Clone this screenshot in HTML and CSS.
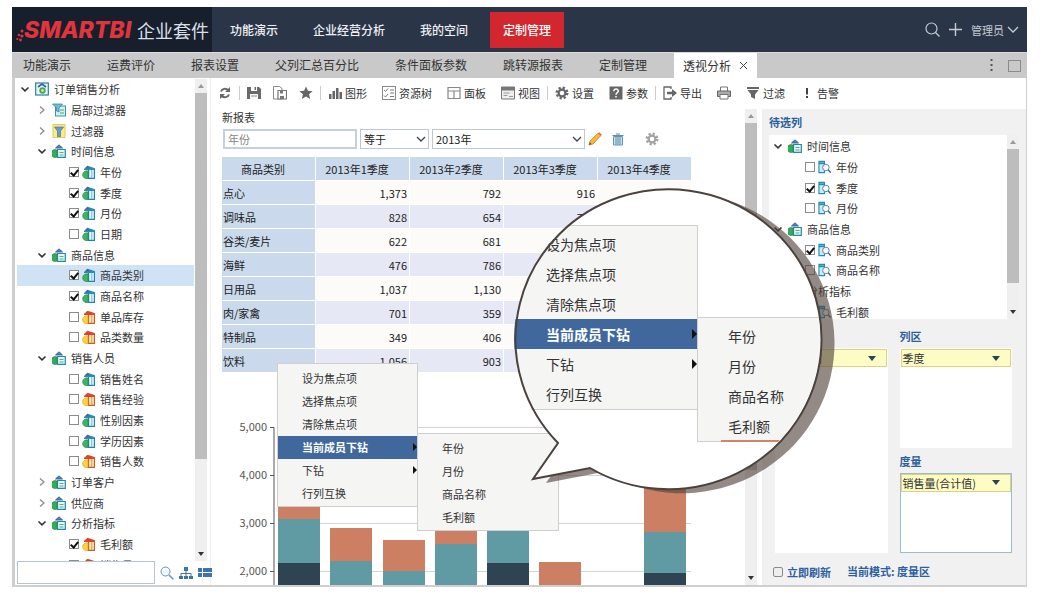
FILE: index.html
```html
<!DOCTYPE html>
<html lang="zh-CN">
<head>
<meta charset="utf-8">
<title>SMARTBI 企业套件</title>
<link rel="stylesheet" href="styles.css">
</head>
<body>
<svg class="defs" aria-hidden="true">
  <symbol id="down" viewBox="0 0 10 10"><path d="M1.5 3.5 5 6.8 8.500 3.500" fill="none" stroke="#333" stroke-width="1.6"/></symbol>
  <symbol id="right" viewBox="0 0 10 10"><path d="M3 1.500 7 5 3 8.500" fill="none" stroke="#888" stroke-width="1.200"/></symbol>
  <symbol id="root" viewBox="0 0 14 14"><rect x=".7" y="1" width="12.600" height="12" fill="#eef7fb" stroke="#2b7f9e" stroke-width="1.200"/><path d="M3 5 7 2l4 3" fill="none" stroke="#345cae" stroke-width="1.600"/><circle cx="7.500" cy="8.500" r="3.200" fill="#46ab55"/><circle cx="7.500" cy="8.500" r="1.300" fill="#e9f2a0"/></symbol>
  <symbol id="localfilter" viewBox="0 0 14 14"><rect x="3.500" y="3" width="10" height="10" fill="#d5eef5" stroke="#3b93ae"/><path d="M.5 1h10L7 5v4L4.500 8V5z" fill="#6fbccb" stroke="#3b8aa0" stroke-width=".8"/><path d="M8 7h4M8 10h4" stroke="#4ea867"/></symbol>
  <symbol id="filter" viewBox="0 0 14 14"><rect x="1" y=".5" width="12" height="13" fill="#fbe98a" stroke="#e2cb55"/><path d="M2.500 3h9L8.500 7v5.500h-3V7z" fill="#6b9bc9" stroke="#4476ac" stroke-width=".7"/></symbol>
  <symbol id="folder" viewBox="0 0 14 14"><path d="M5.500 5.500h7.800v7.800H5.500z" fill="#e3f6f4" stroke="#2789a6" stroke-width="1.200"/><path d="M7.500 8.500h4M7.500 11h4" stroke="#4bb38a"/><path d="M5 6a4 4 0 1 0 0 7z" fill="#37aa57" stroke="#238745" stroke-width=".6"/><path d="M3.500 4 7 .8 10.500 4z" fill="#5683c6" stroke="#2d4a93" stroke-width=".8"/></symbol>
  <symbol id="dim" viewBox="0 0 13 14"><path d="M6.500 4h6v9.500h-6z" fill="#e3f5fc" stroke="#1e84b4" stroke-width="1.300"/><path d="M9.800 4v9" stroke="#79b9d8"/><path d="M6 6a4 4 0 1 0 0 7.500z" fill="#3fb45d" stroke="#248747" stroke-width=".6"/><path d="M2 4 5.500.7 12.500 3V5H2z" fill="#2d8dac"/><path d="M3 3.500 5.500.8 8 3.500z" fill="#4862b5"/></symbol>
  <symbol id="measure" viewBox="0 0 13 14"><path d="M6.500 4h6v9.500h-6z" fill="#fdeab8" stroke="#cf5a22" stroke-width="1.300"/><path d="M9.800 4v9" stroke="#dc9351"/><path d="M6 6a4 4 0 1 0 0 7.500z" fill="#ffd23d" stroke="#d79b21" stroke-width=".6"/><path d="M2 4 5.500.7 12.500 3V5H2z" fill="#d9442e"/></symbol>
  <symbol id="lookup" viewBox="0 0 14 14"><path d="M1 1h6v12H1z" fill="#c7ebf7" stroke="#268cb5" stroke-width="1.200"/><path d="M1 3h6" stroke="#268cb5" stroke-width="2"/><circle cx="8.500" cy="7.500" r="3.500" fill="#f3fbff" stroke="#647c91"/><path d="m11 10 2.700 3.200" stroke="#4b6580" stroke-width="1.400"/></symbol>
  <symbol id="cog" viewBox="0 0 14 14"><circle cx="7" cy="7" r="5.300" fill="none" stroke="currentColor" stroke-width="2.400" stroke-dasharray="2.200 1.963"/><circle cx="7" cy="7" r="3.400" fill="none" stroke="currentColor" stroke-width="2.200"/></symbol>
</svg>

<div class="app">
  <header class="top">
    <div class="brand">
      <svg class="dots" viewBox="0 0 8 16" aria-hidden="true"><g fill="#e0353d"><circle cx="6" cy="5" r="1.500"/><circle cx="3" cy="9" r="1.300"/><circle cx="6" cy="10" r="1.600"/><circle cx="1.300" cy="13" r="1.100"/><circle cx="4.500" cy="14" r="1.400"/></g></svg>
      <span class="wordmark">SMARTBI</span><span class="suite">企业套件</span>
    </div>
    <nav class="nav">
      <a href="#">功能演示</a><a href="#">企业经营分析</a><a href="#">我的空间</a><a href="#" class="on">定制管理</a>
    </nav>
    <div class="user">
      <svg width="15" height="15" viewBox="0 0 15 15" aria-hidden="true"><g fill="none" stroke="#c5cad3" stroke-width="1.200"><circle cx="6.500" cy="6.500" r="5.500"/><path d="m10.500 10.500 4 4"/></g></svg>
      <svg width="13" height="13" viewBox="0 0 13 13" aria-hidden="true"><path d="M6.500 0v13M0 6.500h13" stroke="#c5cad3" stroke-width="1.400"/></svg>
      <button type="button" class="who">管理员<svg width="12" height="8" viewBox="0 0 12 8" aria-hidden="true"><path d="m1 1 5 5 5-5" fill="none" stroke="#c5cad3" stroke-width="1.300"/></svg></button>
    </div>
  </header>

  <nav class="tabs">
    <a href="#">功能演示</a><a href="#">运费评价</a><a href="#">报表设置</a><a href="#">父列汇总百分比</a><a href="#">条件面板参数</a><a href="#">跳转源报表</a><a href="#">定制管理</a>
    <a href="#" class="on">透视分析<svg width="9" height="9" viewBox="0 0 9 9" aria-hidden="true"><path d="m1 1 7 7M8 1 1 8" stroke="#444"/></svg></a>
    <span class="tabtools">
      <svg width="3" height="13" viewBox="0 0 3 13" aria-hidden="true"><path d="M.5 0h2v2h-2zM.5 5h2v2h-2zM.5 10h2v2h-2z" fill="#555"/></svg>
      <svg width="13" height="12" viewBox="0 0 13 12" aria-hidden="true"><rect x=".5" y=".5" width="12" height="11" fill="none" stroke="#8a8a8a"/></svg>
    </span>
  </nav>

  <div class="main">
    <aside class="side">
      <div class="scroller">
        <div class="clip">
          <ul class="tree long">
            <li class="l0"><svg class="ar"><use href="#down"/></svg><svg class="ic"><use href="#root"/></svg>订单销售分析</li>
            <li class="l1"><svg class="ar"><use href="#right"/></svg><svg class="ic"><use href="#localfilter"/></svg>局部过滤器</li>
            <li class="l1"><svg class="ar"><use href="#right"/></svg><svg class="ic"><use href="#filter"/></svg>过滤器</li>
            <li class="l1"><svg class="ar"><use href="#down"/></svg><svg class="ic"><use href="#folder"/></svg>时间信息</li>
            <li class="l2"><label><input type="checkbox" checked><svg class="ic"><use href="#dim"/></svg>年份</label></li>
            <li class="l2"><label><input type="checkbox" checked><svg class="ic"><use href="#dim"/></svg>季度</label></li>
            <li class="l2"><label><input type="checkbox" checked><svg class="ic"><use href="#dim"/></svg>月份</label></li>
            <li class="l2"><label><input type="checkbox"><svg class="ic"><use href="#dim"/></svg>日期</label></li>
            <li class="l1"><svg class="ar"><use href="#down"/></svg><svg class="ic"><use href="#folder"/></svg>商品信息</li>
            <li class="l2 sel"><label><input type="checkbox" checked><svg class="ic"><use href="#dim"/></svg>商品类别</label></li>
            <li class="l2"><label><input type="checkbox" checked><svg class="ic"><use href="#dim"/></svg>商品名称</label></li>
            <li class="l2"><label><input type="checkbox"><svg class="ic"><use href="#measure"/></svg>单品库存</label></li>
            <li class="l2"><label><input type="checkbox"><svg class="ic"><use href="#measure"/></svg>品类数量</label></li>
            <li class="l1"><svg class="ar"><use href="#down"/></svg><svg class="ic"><use href="#folder"/></svg>销售人员</li>
            <li class="l2"><label><input type="checkbox"><svg class="ic"><use href="#dim"/></svg>销售姓名</label></li>
            <li class="l2"><label><input type="checkbox"><svg class="ic"><use href="#measure"/></svg>销售经验</label></li>
            <li class="l2"><label><input type="checkbox"><svg class="ic"><use href="#dim"/></svg>性别因素</label></li>
            <li class="l2"><label><input type="checkbox"><svg class="ic"><use href="#dim"/></svg>学历因素</label></li>
            <li class="l2"><label><input type="checkbox"><svg class="ic"><use href="#measure"/></svg>销售人数</label></li>
            <li class="l1"><svg class="ar"><use href="#right"/></svg><svg class="ic"><use href="#folder"/></svg>订单客户</li>
            <li class="l1"><svg class="ar"><use href="#right"/></svg><svg class="ic"><use href="#folder"/></svg>供应商</li>
            <li class="l1"><svg class="ar"><use href="#down"/></svg><svg class="ic"><use href="#folder"/></svg>分析指标</li>
            <li class="l2"><label><input type="checkbox" checked><svg class="ic"><use href="#measure"/></svg>毛利额</label></li>
            <li class="l2"><label><input type="checkbox"><svg class="ic"><use href="#measure"/></svg>销售量</label></li>
          </ul>
        </div>
        <div class="bar"><i class="up"></i><b class="thumb t80"></b><i class="dn"></i></div>
      </div>
      <div class="find">
        <input type="text" aria-label="搜索">
        <svg width="14" height="14" viewBox="0 0 14 14" aria-hidden="true"><circle cx="5.500" cy="5.500" r="4.500" fill="#f3fafe" stroke="#6e93b3"/><path d="m9 9 4.300 4.300" stroke="#6e93b3" stroke-width="1.600"/></svg>
        <svg width="14" height="12" viewBox="0 0 14 12" aria-hidden="true"><path d="M5 0h4v4H5zM0 9h4v3H0zM5 9h4v3H5zM10 9h4v3h-4z" fill="#3f73a8"/><path d="M7 4v5M2 9V6.500h10V9" fill="none" stroke="#3f73a8"/></svg>
        <svg width="14" height="9" viewBox="0 0 14 9" aria-hidden="true"><path d="M0 0h4v4H0zM5 0h9v4H5zM0 5h4v4H0zM5 5h9v4H5z" fill="#3f73b0"/></svg>
      </div>
    </aside>

    <section class="work">
      <div class="tools">
        <div class="grp">
          <button type="button" aria-label="刷新"><svg viewBox="0 0 14 14"><path d="M3 5.500C4 2.500 8 2 10 4M11 8.500c-1 3-5 3.500-7 1.500" fill="none" stroke="#666" stroke-width="2"/><path d="M12 1v5H7zM2 13V8h5z" fill="#666"/></svg></button>
        </div>
        <div class="grp icons">
          <button type="button" aria-label="保存"><svg viewBox="0 0 14 14"><path d="M0 1h12l2 2v10H0z" fill="#6a6a6a"/><path d="M4 1h6v4H4zM3 8h8v5H3z" fill="#fff"/><path d="M7.500 1H9v3H7.500z" fill="#6a6a6a"/><path d="M4 10h6" stroke="#888"/></svg></button>
          <button type="button" aria-label="另存"><svg viewBox="0 0 14 14"><path d="M.5.500h6l2.500 2V13H.5z" fill="none" stroke="#888"/><path d="M5 4.500h8.500V13H5z" fill="#fff" stroke="#777" stroke-width="1.200"/><path d="M7 4.500h3v3H7zM7 10h4v3H7z" fill="#777"/></svg></button>
          <button type="button" aria-label="收藏"><svg viewBox="0 0 14 14"><path d="m7 .5 1.900 4.300 4.700.4L10 8.300l1.200 4.700L7 10.500 2.800 13 4 8.300.4 5.200l4.700-.4z" fill="#666"/></svg></button>
        </div>
        <div class="grp">
          <button type="button"><svg viewBox="0 0 14 14"><path d="M1 8h2.500v5H1zM4.500 5H7v8H4.500zM8 2h2.500v11H8zM11.500 6H14v7h-2.500z" fill="#666"/></svg>图形</button>
          <button type="button"><svg viewBox="0 0 14 14"><rect x=".5" y=".5" width="13" height="13" fill="#fff" stroke="#888"/><path d="m2 4 1.500 1.500L6 2.500M2 9.500 3.500 11 6 8M8 4h4M8 7h4M8 10.500h4" fill="none" stroke="#777"/></svg>资源树</button>
          <button type="button"><svg viewBox="0 0 14 14"><path d="M1 1.500h12v11H1zM1 5h12M7 5v7.500" fill="none" stroke="#888" stroke-width="1.200"/></svg>面板</button>
          <button type="button"><svg viewBox="0 0 14 14"><path d="M.5 1h13v12H.5z" fill="#eee" stroke="#777"/><path d="M1 1h12v3.500H1z" fill="#777"/><path d="M2.500 7h6M2.500 9.500h4M8 10.500h4" stroke="#999"/></svg>视图</button>
        </div>
        <div class="grp">
          <button type="button"><svg viewBox="0 0 14 14"><use href="#cog"/></svg>设置</button>
          <button type="button"><svg viewBox="0 0 14 14"><path d="M.5.500h13v13H.5z" fill="#666"/><path d="M4.800 5.200c0-3 4.600-2.800 4.400-.1C9.100 6.700 7 6.800 7 8.800M7 10v1.600" fill="none" stroke="#fff" stroke-width="1.500"/></svg>参数</button>
        </div>
        <div class="grp">
          <button type="button"><svg viewBox="0 0 14 14"><path d="M8 3V1H1v12h7v-2" fill="none" stroke="#666" stroke-width="1.300"/><path d="M4 5.800h5V3l5 4-5 4V8.200H4z" fill="#666"/></svg>导出</button>
          <button type="button" aria-label="打印"><svg viewBox="0 0 14 14"><path d="M3.500 5V1h7v4" fill="#fff" stroke="#777"/><path d="M.5 5h13v5.500H.5z" fill="#aaa" stroke="#666"/><path d="M3 8.500h8V13H3z" fill="#fff" stroke="#777"/></svg></button>
          <button type="button"><svg viewBox="0 0 14 14"><path d="M1 1h12v2H1zM1.500 4h11L9 8.500V13l-4-2V8.500z" fill="#666"/></svg>过滤</button>
          <button type="button"><svg viewBox="0 0 14 14"><path d="M6 2h2v6.500H6zM6 10h2v2H6z" fill="#444"/></svg>告警</button>
        </div>
      </div>

      <div class="split">
        <div class="report">
          <div class="page">
            <h1>新报表</h1>
            <form class="conds">
              <input type="text" placeholder="年份" aria-label="字段" class="c1">
              <span class="pick c2"><select aria-label="条件"><option>等于</option></select><svg width="10" height="7" viewBox="0 0 10 7" aria-hidden="true"><path d="m1 1 4 4 4-4" fill="none" stroke="#444" stroke-width="1.300"/></svg></span>
              <span class="pick c3"><select aria-label="值"><option>2013年</option></select><svg width="10" height="7" viewBox="0 0 10 7" aria-hidden="true"><path d="m1 1 4 4 4-4" fill="none" stroke="#444" stroke-width="1.300"/></svg></span>
              <button type="button" aria-label="编辑"><svg viewBox="0 0 14 14"><path d="m1 13 1-4L10 1.200l2.800 2.500L5 12z" fill="#f5b93c" stroke="#c88321" stroke-width=".8"/><path d="m10 1.200 2.800 2.500 1-1.200L11.200.2z" fill="#d66a50"/><path d="m1 13 .8-2.500L3.500 12z" fill="#444"/></svg></button>
              <button type="button" aria-label="删除"><svg viewBox="0 0 14 14"><path d="M2.500 4.500h9V13h-9z" fill="#c8dfea" stroke="#6797b4"/><path d="M1.500 3.500h11M5 2h4M5 5v7.500M7 5v7.500M9 5v7.500" stroke="#5f8eae"/></svg></button>
              <button type="button" aria-label="设置" class="pref"><svg viewBox="0 0 14 14"><use href="#cog"/></svg></button>
            </form>

            <table class="grid">
              <thead><tr><th>商品类别</th><th>2013年1季度</th><th>2013年2季度</th><th>2013年3季度</th><th>2013年4季度</th></tr></thead>
              <tbody>
                <tr><th>点心</th><td>1,373</td><td>792</td><td>916</td><td>1,016</td></tr>
                <tr><th>调味品</th><td>828</td><td>654</td><td>729</td><td></td></tr>
                <tr><th>谷类/麦片</th><td>622</td><td>681</td><td></td><td></td></tr>
                <tr><th>海鲜</th><td>476</td><td>786</td><td></td><td></td></tr>
                <tr><th>日用品</th><td>1,037</td><td>1,130</td><td></td><td></td></tr>
                <tr><th>肉/家禽</th><td>701</td><td>359</td><td></td><td></td></tr>
                <tr><th>特制品</th><td>349</td><td>406</td><td></td><td></td></tr>
                <tr><th>饮料</th><td>1,056</td><td>903</td><td></td><td></td></tr>
              </tbody>
            </table>

            <svg class="chart" width="480" height="212" viewBox="0 0 480 212" role="img" aria-label="销售柱状图">
              <path d="M56 53.500h413M56 101.500h413M56 149.500h413M56 197.500h413" stroke="#d4d4d4"/>
              <path d="M48 53.500h4v158.500M48 101.500h4M48 149.500h4M48 197.500h4" fill="none" stroke="#555"/>
              <g class="ticks"><text x="45" y="57">5,000</text><text x="45" y="105">4,000</text><text x="45" y="153">3,000</text><text x="45" y="201">2,000</text></g>
              <g fill="#cd7f63"><path d="M56 131h42v14H56zM108 154h42v33h-42zM161 166h42v31h-42zM213 150h42v20h-42zM317 188h42v24h-42zM422 100h42v58h-42z"/></g>
              <g fill="#609ba3"><path d="M56 145h42v44H56zM108 187h42v25h-42zM161 197h42v15h-42zM213 170h42v42h-42zM265 150h42v39h-42zM422 158h42v41h-42z"/></g>
              <g fill="#2e4453"><path d="M56 189h42v23H56zM265 189h42v23h-42zM422 199h42v13h-42z"/></g>
            </svg>
          </div>
          <div class="bar"><i class="up"></i><b class="thumb t76"></b><i class="dn"></i></div>
        </div>

        <aside class="config">
          <h2>待选列</h2>
          <div class="cols">
            <div class="clip">
              <ul class="tree short">
                <li class="l1"><svg class="ar"><use href="#down"/></svg><svg class="ic"><use href="#folder"/></svg>时间信息</li>
                <li class="l2"><label><input type="checkbox"><svg class="ic"><use href="#lookup"/></svg>年份</label></li>
                <li class="l2"><label><input type="checkbox" checked><svg class="ic"><use href="#lookup"/></svg>季度</label></li>
                <li class="l2"><label><input type="checkbox"><svg class="ic"><use href="#lookup"/></svg>月份</label></li>
                <li class="l1"><svg class="ar"><use href="#down"/></svg><svg class="ic"><use href="#folder"/></svg>商品信息</li>
                <li class="l2"><label><input type="checkbox" checked><svg class="ic"><use href="#lookup"/></svg>商品类别</label></li>
                <li class="l2"><label><input type="checkbox"><svg class="ic"><use href="#lookup"/></svg>商品名称</label></li>
                <li class="l1"><svg class="ar"><use href="#down"/></svg><svg class="ic"><use href="#folder"/></svg>分析指标</li>
                <li class="l2"><label><input type="checkbox"><svg class="ic"><use href="#lookup"/></svg>毛利额</label></li>
              </ul>
            </div>
            <div class="bar"><i class="up"></i><b class="thumb t88"></b><i class="dn"></i></div>
          </div>
          <div class="zones">
            <div class="zcol"><h2>行区</h2><div class="zone"><button type="button" class="chip">商品类别<i></i></button></div></div>
            <div class="zcol">
              <h2>列区</h2><div class="zone z1"><button type="button" class="chip">季度<i></i></button></div>
              <h2 class="second">度量</h2><div class="zone z2"><button type="button" class="chip">销售量(合计值)<i></i></button></div>
            </div>
          </div>
          <div class="mode"><label><input type="checkbox">立即刷新</label><span>当前模式: 度量区</span></div>
        </aside>
      </div>
    </section>
  </div>

  <div class="ctx">
    <ul class="menu"><li>设为焦点项</li><li>选择焦点项</li><li>清除焦点项</li><li class="hot more">当前成员下钻</li><li class="more">下钻</li><li>行列互换</li></ul>
    <ul class="menu sub"><li>年份</li><li>月份</li><li>商品名称</li><li>毛利额</li></ul>
  </div>

  <div class="callout">
    <svg class="shape" viewBox="0 0 340 330" aria-hidden="true">
      <path d="M58 263A153 150 0 1 1 90 288L33 299Z" transform="translate(13 4)" fill="#52423a" fill-opacity=".62"/>
      <path d="M58 263A153 150 0 1 1 90 288L33 299Z" fill="#fff"/>
    </svg>
    <div class="lens">
      <ul class="menu big"><li>设为焦点项</li><li>选择焦点项</li><li>清除焦点项</li><li class="hot more">当前成员下钻</li><li class="more">下钻</li><li>行列互换</li></ul>
      <ul class="menu big sub"><li>年份</li><li>月份</li><li>商品名称</li><li>毛利额</li></ul>
    </div>
    <svg class="shape" viewBox="0 0 340 330" aria-hidden="true"><path d="M58 263A153 150 0 1 1 90 288L33 299Z" fill="none" stroke="#4a423e" stroke-width="2"/></svg>
  </div>
</div>
</body>
</html>
```

FILE: styles.css
```css
* { box-sizing: border-box; }
body {
  margin: 0;
  padding: 7px 16px 13px 12px;
  background: #fff;
  color: #333;
  font: 11px/20px "Noto Sans CJK SC", "Noto Sans", sans-serif;
}
ul { margin: 0; padding: 0; list-style: none; }
a { color: inherit; text-decoration: none; }
svg { flex: none; display: block; }
.defs { position: absolute; width: 0; height: 0; }
button { margin: 0; padding: 0; border: 0; background: none; color: inherit; font: inherit; }

.app {
  position: relative;
  display: flex;
  flex-direction: column;
  height: calc(100vh - 20px);
  min-height: 560px;
}

/* header */
.top { display: flex; height: 45px; background: #2b3548; color: #eceff3; }
.brand { display: flex; align-items: center; width: 200px; padding-left: 4px; background: #181f2c; }
.dots { width: 8px; height: 16px; align-self: flex-end; margin-bottom: 10px; }
.wordmark { color: #e0353d; font: italic 800 23px/44px Inter, sans-serif; width: 109px; white-space: nowrap; }
.suite { margin-left: 4px; color: #d9dfe8; font-size: 18px; line-height: 42px; white-space: nowrap; }
.nav { display: flex; flex: 1; gap: 9px; padding: 5px 5px 4px; font-size: 12px; font-weight: 500; line-height: 36px; white-space: nowrap; }
.nav a { padding: 0 13px; }
.nav .on { background: #d3272f; color: #fff; }
.user { display: flex; align-items: center; gap: 9px; padding-right: 8px; color: #c5cad3; }
.who { display: flex; align-items: center; gap: 3px; }

/* tabs */
.tabs {
  display: flex; gap: 18px; height: 26px; padding-left: 2px;
  border-top: 1px solid #dcdcdc; background: #c9c9c9;
  font-size: 12px; line-height: 24px; white-space: nowrap;
}
.tabs a { padding: 0 9px; }
.tabs .on { display: flex; align-items: center; gap: 8px; background: #fff; }
.tabtools { display: flex; align-items: center; gap: 15px; margin-left: auto; padding-right: 6px; }

.main {
  display: flex; flex: 1; min-height: 0;
  border: solid #cfcfcf; border-width: 0 1px 2px 3px;
  background: #fff;
}

/* scroll bars */
.bar { display: flex; flex-direction: column; align-items: stretch; width: 12px; background: #efefef; }
.bar i { height: 14px; flex: none; }
.up::before, .dn::before { content: ""; display: block; margin: 5px auto 0; width: 0; border: 3px solid transparent; }
.up::before { border-top: 0; border-bottom: 4px solid #999; }
.dn::before { border-bottom: 0; border-top: 4px solid #333; }
.dn { margin-top: auto; }
.thumb { background: #bdbdbd; }
.t80 { height: 76%; }
.t76 { height: 73%; }
.t88 { height: 73%; }

/* trees */
.clip { flex: 1; min-width: 0; overflow: hidden; }
.tree { display: grid; grid-auto-rows: 1fr; white-space: nowrap; line-height: 18px; }
.tree li, .tree label { display: flex; align-items: center; gap: 5px; }
.tree label { gap: 3px; }
.tree label .ic { width: 13px; margin-right: 2px; }
.long { height: 496px; margin: 0 1px 0 2px; }
.short { height: 186px; padding: 0; }
.ar { width: 10px; height: 10px; }
.ic { width: 14px; height: 14px; }
.l0 { padding-left: 3px; }
.l1 { padding-left: 20px; }
.l2 { padding-left: 52px; }
.short .l1 { padding-left: 4px; }
.short .l2 { padding-left: 36px; }
.sel { background: #cfe3f5; }
input[type="checkbox"] {
  appearance: none; flex: none; width: 10px; height: 10px; margin: 0;
  border: 1px solid #8b8b8b; background: #fff;
}
input[type="checkbox"]:checked::after {
  content: ""; display: block; width: 3px; height: 6px; margin: 0 0 0 2px;
  border: solid #111; border-width: 0 2px 2px 0; transform: rotate(40deg);
}

.side { display: flex; flex-direction: column; width: 196px; flex: none; padding: 1px 3px 1px 0; border-right: 1px solid #ececec; }
.scroller { display: flex; flex: 1; min-height: 0; }
.find { display: flex; align-items: center; gap: 5px; height: 23px; padding-left: 2px; }
.find input { width: 138px; height: 23px; border: 1px solid #b9c4d2; background: #fff; }

/* toolbar */
.work { display: flex; flex: 1; flex-direction: column; min-width: 0; }
.tools { display: flex; align-items: center; height: 31px; padding-bottom: 2px; white-space: nowrap; }
.grp { display: flex; gap: 15px; padding: 0 7px; border-left: 1px solid #ccc; line-height: 14px; }
.grp:first-child { border: 0; }
.icons { gap: 12px; }
.tools button { display: flex; align-items: center; gap: 3px; }
.tools svg { width: 14px; height: 14px; color: #666; }

.split { display: flex; flex: 1; min-height: 0; }
.report { display: flex; flex: 1; min-width: 0; padding-right: 5px; }
.page { flex: 1; min-width: 0; overflow: hidden; padding-left: 11px; }
h1 { margin: 0 0 4px; font-size: 11px; font-weight: 400; line-height: 16px; }
.conds { display: flex; align-items: center; gap: 3px; height: 20px; }
.conds input, .conds select {
  width: 100%; height: 20px; padding: 0 3px; border: 1px solid #bfc8d0; border-radius: 0;
  background: #fff; color: #222; font: 11px/18px "Noto Sans CJK SC", sans-serif; appearance: none;
}
.conds .c1 { width: 134px; margin-left: 1px; border: 2px solid #c5d0da; }
.conds input::placeholder { color: #888; opacity: 1; }
.pick { position: relative; }
.pick svg { position: absolute; right: 3px; top: 7px; }
.c2 { width: 69px; }
.c3 { width: 153px; }
.conds button { width: 14px; }
.conds button + button { margin-left: 6px; }
.conds .pref, .conds button + .pref { margin-left: 17px; color: #a3a3a3; }
.conds button svg { width: 14px; height: 14px; }

.grid { width: 470px; margin-top: 8px; table-layout: fixed; border-collapse: separate; border-spacing: 0; line-height: 20px; }
.grid th, .grid td { height: 24px; padding: 0 2px; border: solid #fff; border-width: 0 1px 1px 0; font-weight: 400; color: #222; }
.grid th { background: #cadaec; text-align: left; padding: 0 1px; }
.grid thead th { text-align: center; padding-right: 12px; }
.grid td { background: #fcfbf8; text-align: right; }
.grid tbody tr:nth-child(even) td { background: #e6e8f5; }
.chart { margin-top: 1px; }
.ticks { fill: #555; font-size: 11px; text-anchor: end; }

/* right-hand panel */
.config { display: flex; flex-direction: column; width: 264px; flex: none; padding: 5px 7px 4px; background: #f2f1f1; }
h2 { margin: 0; color: #2c5f9e; font-size: 11px; font-weight: 700; line-height: 16px; }
.cols { display: flex; height: 184px; margin-top: 5px; background: #fff; }
.cols .clip { padding-top: 1px; }
.zones { display: flex; flex: 1; gap: 12px; min-height: 0; margin: 9px 7px 0 6px; }
.zcol { display: flex; flex: 1; flex-direction: column; }
.zone { flex: 1; margin-top: 4px; padding: 1px; background: #fff; }
.z1 { flex: 5; }
.second { margin-top: 5px; }
.z2 { flex: 4; border: 1px solid #9dbad2; padding: 0; }
.chip {
  display: flex; align-items: center; justify-content: space-between; width: 100%; height: 18px;
  padding: 0 10px 0 1px; border: 1px solid #dcd37c; background: #fdfcc4; color: #333; line-height: 16px;
}
.chip i { border: 4px solid transparent; border-top: 5px solid #2b4256; border-bottom: 0; }
.mode { display: flex; gap: 16px; height: 28px; padding: 10px 4px 0; color: #2c5f9e; font-weight: 700; line-height: 16px; white-space: nowrap; }
.mode label { display: flex; align-items: center; gap: 4px; }
.mode input[type="checkbox"] { border-radius: 2px; background: #eee; }

/* context menu */
.ctx { position: absolute; left: 265px; top: 356px; display: flex; align-items: flex-start; }
.menu { flex: none; width: 141px; padding: 3px 0 1px; border: 1px solid #cfcfcf; background: #f5f5f4; line-height: 23px; white-space: nowrap; }
.menu li { position: relative; height: 23px; padding-left: 24px; }
.menu .hot { background: #40689c; color: #fff; font-weight: 700; }
.more::after {
  content: ""; position: absolute; right: 0; top: 7px;
  border: 4px solid transparent; border-left-color: #111; border-right: 0;
}
.ctx .sub { margin-top: 70px; margin-left: -1px; width: 142px; }

/* magnified bubble */
.callout { position: absolute; left: 488px; top: 173px; width: 340px; height: 330px; }
.shape { position: absolute; left: 0; top: 0; width: 340px; height: 330px; }
.lens {
  position: absolute; left: 14px; top: 9px; width: 306px; height: 300px;
  display: flex; align-items: flex-start; padding-top: 36px;
  clip-path: ellipse(50% 50%);
}
.big { width: 184px; padding: 3px 0 0; font-size: 14px; line-height: 30px; border-left: 0; }
.big li { height: 30px; padding-left: 32px; }
.big .more::after { top: 10px; border-width: 5px; border-right: 0; }
.lens .sub { position: relative; width: 140px; margin-top: 92px; margin-left: -1px; border-left: 1px solid #cfcfcf; }
.lens .sub li { padding-left: 30px; }
.lens .sub::after { content: ""; position: absolute; left: 23px; right: 0; bottom: -1px; height: 2px; background: #d38468; }
```
